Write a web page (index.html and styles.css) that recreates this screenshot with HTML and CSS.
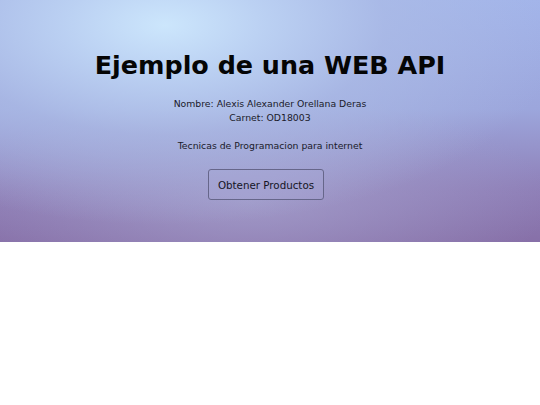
FILE: index.html
```html
<!DOCTYPE html>
<html>
<head>
<meta charset="utf-8">
<link rel="stylesheet" href="styles.css">
</head>
<body>
<header class="hero">
  <h1 class="title">Ejemplo de una WEB API</h1>
  <p class="info">Nombre: Alexis Alexander Orellana Deras<br>Carnet: OD18003</p>
  <p class="info">Tecnicas de Programacion para internet</p>
  <button class="btn">Obtener Productos</button>
</header>
</body>
</html>
```
FILE: styles.css
```css
html, body { margin: 0; padding: 0; background: #fff; }
body { font-family: "DejaVu Sans", sans-serif; color: #111; }
.hero {
  height: 242px;
  box-sizing: border-box;
  display: flex;
  flex-direction: column;
  align-items: center;
  padding-top: 50px;
  background:
    radial-gradient(ellipse 400px 200px at 165px 25px, rgba(204,230,252,1) 0%, rgba(188,210,243,0.95) 25%, rgba(172,188,230,0.7) 55%, rgba(165,175,220,0) 100%),
    radial-gradient(ellipse 300px 110px at 250px 200px, rgba(168,165,208,0.7) 0%, rgba(168,165,208,0) 100%),
    linear-gradient(180deg, #a2b4ea 0%, #9ca6dc 45%, #8f80b8 78%, #8770a8 100%);
}
.title { margin: 0; font-size: 25.4px; font-weight: bold; line-height: 30px; color: #050505; }
.info { margin: 17px 0 0; font-size: 9.3px; line-height: 14px; text-align: center; color: #1a1a2a; }
.info + .info { margin-top: 14px; }
.btn {
  margin: 16px 8px 0 0;
  width: 116px; height: 31px;
  white-space: nowrap;
  padding: 0;
  font-family: "DejaVu Sans", sans-serif; font-size: 10.3px; color: #151525;
  background: rgba(170,170,215,0.3);
  border: 1px solid #66668a; border-radius: 3px;
}
```
